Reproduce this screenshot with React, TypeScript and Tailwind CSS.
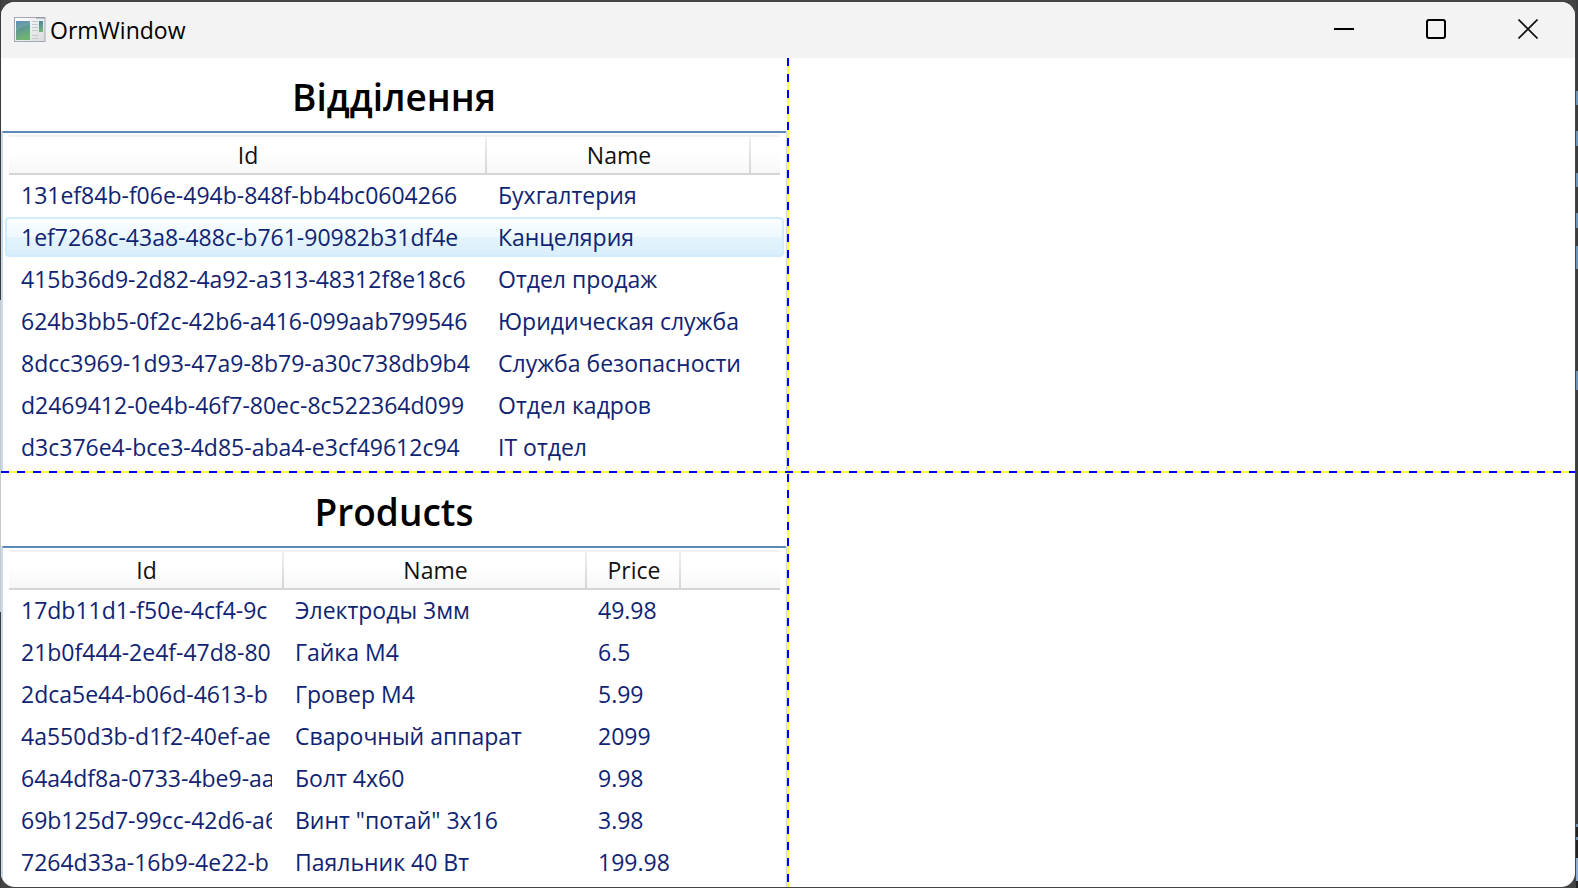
import React from "react";

type Column = { label: string; width: string };
type ListProps = { title: string; columns: Column[]; rows: string[][]; selected?: number };

const departments = [
  ["131ef84b-f06e-494b-848f-bb4bc0604266", "Бухгалтерия"],
  ["1ef7268c-43a8-488c-b761-90982b31df4e", "Канцелярия"],
  ["415b36d9-2d82-4a92-a313-48312f8e18c6", "Отдел продаж"],
  ["624b3bb5-0f2c-42b6-a416-099aab799546", "Юридическая служба"],
  ["8dcc3969-1d93-47a9-8b79-a30c738db9b4", "Служба безопасности"],
  ["d2469412-0e4b-46f7-80ec-8c522364d099", "Отдел кадров"],
  ["d3c376e4-bce3-4d85-aba4-e3cf49612c94", "IT отдел"],
];

const products = [
  ["17db11d1-f50e-4cf4-9c", "Электроды 3мм", "49.98"],
  ["21b0f444-2e4f-47d8-80", "Гайка М4", "6.5"],
  ["2dca5e44-b06d-4613-b", "Гровер М4", "5.99"],
  ["4a550d3b-d1f2-40ef-ae", "Сварочный аппарат", "2099"],
  ["64a4df8a-0733-4be9-aa", "Болт 4х60", "9.98"],
  ["69b125d7-99cc-42d6-a6", "Винт \"потай\" 3х16", "3.98"],
  ["7264d33a-16b9-4e22-b", "Паяльник 40 Вт", "199.98"],
];

function ListPanel({ title, columns, rows, selected }: ListProps) {
  return (
    <section className="flex min-h-0 min-w-0 flex-col overflow-hidden">
      <h2 className="flex h-[73px] shrink-0 items-center justify-center pt-1 text-[37px] font-semibold text-black">
        {title}
      </h2>
      <div className="min-h-0 flex-1 overflow-hidden rounded-t-[2px] border-t-2 border-r border-l-2 border-x-[#c5daed] border-t-[#5b8aba] px-0.5 pt-0.5">
        <table className="w-full table-fixed border-separate border-spacing-0 text-[23px]">
          <colgroup>
            <col className="w-1" />
            {columns.map((c) => (
              <col key={c.label} className={c.width} />
            ))}
            <col />
            <col className="w-1" />
          </colgroup>
          <thead>
            <tr className="h-10">
              <td className="p-0" />
              {columns.map((c) => (
                <th
                  key={c.label}
                  className="relative border-t-2 border-b-2 border-t-[#f2f2f2] border-b-[#d5d5d5] bg-linear-to-b from-white from-40% to-[#f6f7f8] p-0 text-center leading-9 font-normal text-[#111]"
                >
                  {c.label}
                  <span className="absolute inset-y-0 right-0 w-0.5 bg-linear-to-b from-[#f0f0f0] to-[#d5d5d5]" />
                </th>
              ))}
              <td className="border-t-2 border-b-2 border-t-[#f2f2f2] border-b-[#d5d5d5] bg-linear-to-b from-white from-40% to-[#f6f7f8] p-0" />
              <td className="p-0" />
            </tr>
          </thead>
        </table>
        <div className="-mt-0.5 text-[#102472]">
          <table className="w-full table-fixed border-separate border-spacing-x-0 border-spacing-y-0.5 text-[23px]">
            <colgroup>
              <col className="w-1" />
              {columns.map((c) => (
                <col key={c.label} className={c.width} />
              ))}
              <col />
              <col className="w-1" />
            </colgroup>
            <tbody>
              {rows.map((r, i) => {
                const on = i === selected;
                const fill = on
                  ? "border-y-2 border-[#d1edfb] bg-[linear-gradient(#f9fdff,#eff9fe_50%,#e5f4fc_50%,#d9effb)]"
                  : "border-y-2 border-transparent";
                return (
                  <tr key={r[0]} className="h-10" aria-selected={on}>
                    <td className={`${fill} rounded-l-[4px] border-l-2 p-0`} />
                    {r.map((v, j) => (
                      <td key={j} className={`${fill} py-0 ${j === 0 ? "px-3" : "pr-1 pl-[11px]"}`}>
                        <div className="overflow-hidden leading-9 text-clip whitespace-nowrap">{v}</div>
                      </td>
                    ))}
                    <td className={`${fill} p-0`} />
                    <td className={`${fill} rounded-r-[4px] border-r-2 p-0`} />
                  </tr>
                );
              })}
            </tbody>
          </table>
        </div>
      </div>
    </section>
  );
}

function AppIcon() {
  return (
    <svg width="32" height="26" viewBox="0 0 32 26" aria-hidden="true">
      <defs>
        <linearGradient id="pane" x1="0" y1="0" x2="0.3" y2="1">
          <stop offset="0" stopColor="#4a7fae" />
          <stop offset="1" stopColor="#72b373" />
        </linearGradient>
        <linearGradient id="frame" x1="0" y1="0" x2="1" y2="1">
          <stop offset="0" stopColor="#ffffff" />
          <stop offset="1" stopColor="#d9dbdd" />
        </linearGradient>
      </defs>
      <rect x="0.5" y="0.5" width="30.5" height="24" fill="url(#frame)" stroke="#a3a9b2" />
      <path d="M22 1H31" stroke="#8793a3" />
      <rect x="2" y="4" width="14" height="19" fill="url(#pane)" />
      <path d="M2 14Q8 9 16 8V4H2Z" fill="#ffffff" opacity="0.12" />
      <path d="M18 4.5H24M18 7.5H24M18 10.5H24M18 13.5H24M18 18.5H24M18 21.5H24" stroke="#c6c9cc" />
      <rect x="25" y="4" width="4" height="11" fill="url(#pane)" />
    </svg>
  );
}

export default function App() {
  const button = "flex h-[54px] w-[92px] items-center justify-center";
  return (
    <div className="flex h-screen flex-col bg-[#444] bg-[linear-gradient(#3b3b3b_300px,#c8c8c8_300px_612px,#3b3b3b_612px),linear-gradient(#3a3c3d_91px,#6f93b5_91px_105px,#3a3c3d_105px_131px,#6f93b5_131px_146px,#3a3c3d_146px_173px,#6f93b5_173px_187px,#3a3c3d_187px_213px,#6f93b5_213px_228px,#3a3c3d_228px_246px,#6f93b5_246px_269px,#3a3c3d_269px_371px,#6f93b5_371px_390px,#3a3c3d_390px_824px,#6f93b5_824px_827px,#222_827px_837px,#6f93b5_837px_840px,#222_840px_858px,#8fb0d0_858px_881px,#222_881px)] bg-[length:1px_100%,2px_100%] bg-[position:left,right] bg-no-repeat pt-0.5 pr-[3px] pb-px pl-px font-['Open_Sans','Noto_Sans',sans-serif]">
      <div className="flex min-h-0 flex-1 flex-col overflow-hidden rounded-[14px] bg-white">
        <header className="flex h-14 shrink-0 items-start justify-between bg-[#f3f3f3] pr-px">
          <div className="flex h-14 items-center gap-1 pl-[13px]">
            <AppIcon />
            <h1 className="text-[23px] text-black">OrmWindow</h1>
          </div>
          <div className="flex">
            <button className={button} aria-label="Minimize">
              <svg width="20" height="20" viewBox="0 0 20 20"><path d="M0 10H20" stroke="#000" strokeWidth="2" /></svg>
            </button>
            <button className={button} aria-label="Maximize">
              <svg width="20" height="20" viewBox="0 0 20 20"><rect x="1" y="1" width="18" height="18" rx="2" fill="none" stroke="#000" strokeWidth="2" /></svg>
            </button>
            <button className={button} aria-label="Close">
              <svg width="20" height="20" viewBox="0 0 20 20"><path d="M0.5 0.5L19.5 19.5M19.5 0.5L0.5 19.5" stroke="#111" strokeWidth="1.7" /></svg>
            </button>
          </div>
        </header>
        <main className="grid min-h-0 flex-1 grid-cols-[minmax(0,1fr)_2px_minmax(0,1fr)] grid-rows-[minmax(0,413fr)_2px_minmax(0,414fr)]">
          <div className="col-start-2 row-span-3 row-start-1 bg-[repeating-linear-gradient(to_bottom,#0000f5_0_8px,#ffff46_8px_16px)]" />
          <div className="col-span-3 col-start-1 row-start-2 bg-[repeating-linear-gradient(to_right,#0000f5_0_8px,#ffff46_8px_16px)]" />
          <div className="col-start-1 row-start-1 grid min-h-0 min-w-0">
            <ListPanel
              title="Відділення"
              columns={[
                { label: "Id", width: "w-[478px]" },
                { label: "Name", width: "w-[264px]" },
              ]}
              rows={departments}
              selected={1}
            />
          </div>
          <div className="col-start-1 row-start-3 grid min-h-0 min-w-0">
            <ListPanel
              title="Products"
              columns={[
                { label: "Id", width: "w-[275px]" },
                { label: "Name", width: "w-[303px]" },
                { label: "Price", width: "w-[94px]" },
              ]}
              rows={products}
            />
          </div>
        </main>
      </div>
    </div>
  );
}
